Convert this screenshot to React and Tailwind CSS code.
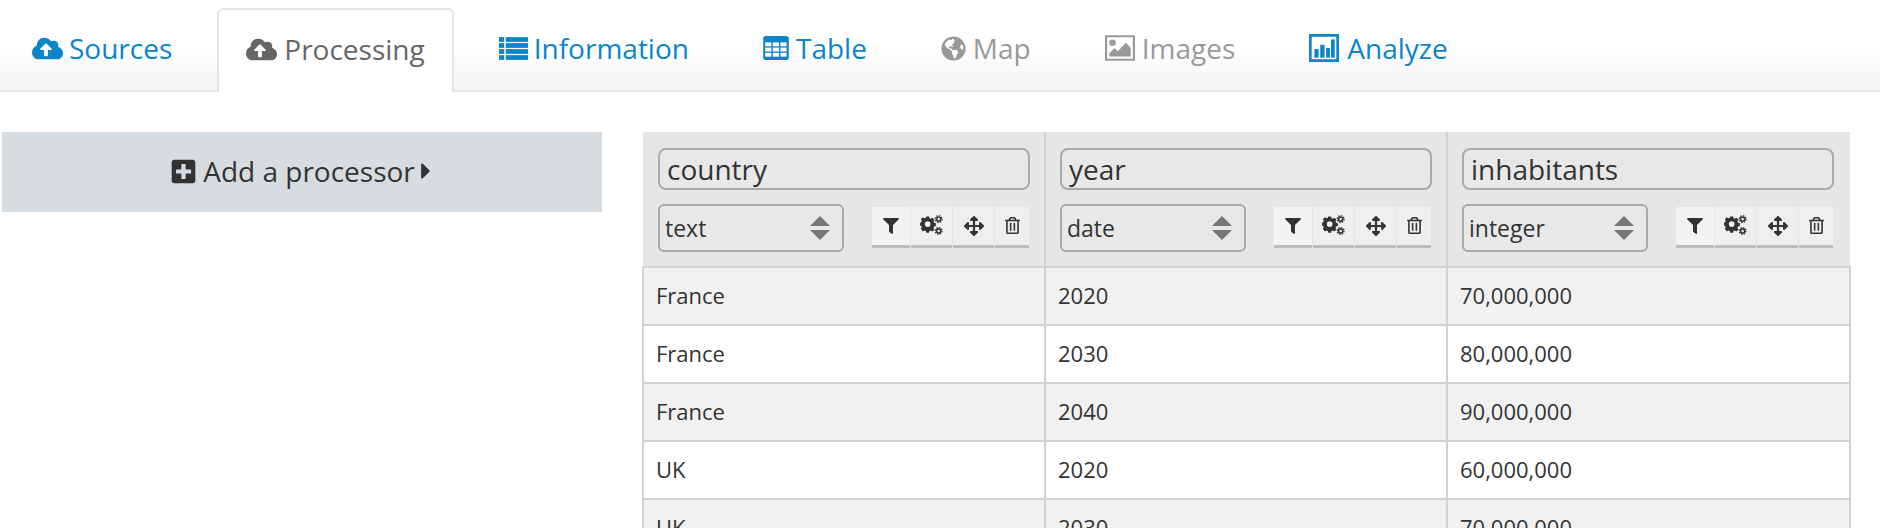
import React from "react";
import { FaCloudUploadAlt, FaGlobeAmericas, FaPlusSquare, FaCaretRight, FaFilter, FaArrowsAlt, FaRegTrashAlt } from "react-icons/fa";

function Analyze({ className }) {
  return (
    <svg viewBox="0 0 28 28" className={className} fill="currentColor">
      <path d="M0 1h28v26H0V1zm2.5 2.5v21h23v-21h-23z" fillRule="evenodd" />
      <rect x="5" y="15" width="4" height="8" />
      <rect x="10.5" y="11" width="4" height="12" />
      <rect x="16" y="14" width="3.5" height="9" />
      <rect x="20.5" y="6" width="3.5" height="17" />
    </svg>
  );
}

function ListIcon({ className }) {
  return (
    <svg viewBox="0 0 28 22" className={className} fill="currentColor">
      {[0, 5.8, 11.6, 17.4].map((y) => (
        <g key={y}>
          <rect x="0" y={y} width="5" height="4.6" />
          <rect x="6.5" y={y} width="21.5" height="4.6" />
        </g>
      ))}
    </svg>
  );
}

function TableIcon({ className }) {
  const cells = [];
  for (let r = 0; r < 3; r++) {
    for (let c = 0; c < 3; c++) {
      cells.push(<rect key={`${r}-${c}`} x={2 + c * 7.6} y={6.4 + r * 5.2} width="6.2" height="3.9" fill="#fbfbfb" />);
    }
  }
  return (
    <svg viewBox="0 0 25.6 24" className={className} fill="currentColor">
      <rect x="0" y="0" width="25.6" height="24" rx="2.5" />
      {cells}
    </svg>
  );
}

function ImageIcon({ className }) {
  return (
    <svg viewBox="0 0 28 24" className={className} fill="currentColor">
      <path d="M0 0h28v24H0V0zm2 2v20h24V2H2z" fillRule="evenodd" />
      <circle cx="7" cy="7" r="3" />
      <path d="M4 20v-3l5-5 3 3 7.5-8L24 12v8z" />
    </svg>
  );
}

function Gears({ className }) {
  return (
    <svg viewBox="0 0 24 22" className={className} fill="currentColor">
      <path
        fillRule="evenodd"
        d="M6.5 5h3l.4 1.9 1.5.6 1.6-1 2.1 2.1-1 1.6.6 1.5 1.9.4v3l-1.9.4-.6 1.5 1 1.6-2.1 2.1-1.6-1-1.5.6-.4 1.7h-3l-.4-1.7-1.5-.6-1.6 1L.8 18l1-1.6-.6-1.5L0 14.5v-3l1.2-.4.6-1.5-1-1.6 2.2-2.1 1.6 1 1.5-.6.4-1.3zM8 10a3 3 0 1 0 0 6 3 3 0 0 0 0-6z"
        transform="translate(0 -3.5)"
      />
      <g fill="none" stroke="currentColor">
        <circle cx="19.5" cy="4.3" r="2.2" strokeWidth="1.7" />
        <circle cx="19.5" cy="4.3" r="3.6" strokeWidth="1.3" strokeDasharray="1.5 1.3" />
        <circle cx="19.5" cy="16.7" r="2.2" strokeWidth="1.7" />
        <circle cx="19.5" cy="16.7" r="3.6" strokeWidth="1.3" strokeDasharray="1.5 1.3" />
      </g>
    </svg>
  );
}

const tabs = [
  { label: "Sources", Icon: FaCloudUploadAlt, tone: "text-[#0b85c8]", size: "w-[31px] h-[31px]", cls: "ml-[3px] gap-[6px]" },
  { label: "Processing", Icon: FaCloudUploadAlt, tone: "text-[#666666]", size: "w-[31px] h-[31px]", cls: "gap-[7px]", active: true },
  { label: "Information", Icon: ListIcon, tone: "text-[#0b85c8]", size: "w-[29px] h-[23px]", cls: "gap-[6px]" },
  { label: "Table", Icon: TableIcon, tone: "text-[#0b85c8]", size: "w-[26px] h-[24px]", cls: "gap-[7px]" },
  { label: "Map", Icon: FaGlobeAmericas, tone: "text-[#999999]", size: "w-[25px] h-[25px]", cls: "gap-[7px]" },
  { label: "Images", Icon: ImageIcon, tone: "text-[#999999]", size: "w-[30px] h-[26px]", cls: "gap-[7px]" },
  { label: "Analyze", Icon: Analyze, tone: "text-[#0b85c8]", size: "w-[30px] h-[30px]", cls: "gap-[8px]" },
];

const columns = [
  { name: "country", type: "text", pad: "pl-[15px] pr-[14px]" },
  { name: "year", type: "date", pad: "pl-[14px] pr-[14px]" },
  { name: "inhabitants", type: "integer", pad: "pl-[14px] pr-[16px]" },
];

const rows = [
  ["France", "2020", "70,000,000"],
  ["France", "2030", "80,000,000"],
  ["France", "2040", "90,000,000"],
  ["UK", "2020", "60,000,000"],
  ["UK", "2030", "70,000,000"],
];

function ToolButton({ Icon, active, cls, iconCls }) {
  return (
    <div className={`flex h-[41px] items-center justify-center border-b-[3px] border-[#bdbdbd] text-[#333333] ${active ? "bg-[#f2f2f2]" : "bg-[#efefef]"} ${cls}`}>
      <Icon className={iconCls} />
    </div>
  );
}

function HeaderCell({ col, last }) {
  return (
    <th className={`h-[135px] bg-[#e6e6e6] p-0 align-top font-normal ${last ? "" : "border-r-2 border-[#d2d2d2]"}`}>
      <div className={`flex flex-col gap-[14px] pt-[16px] ${col.pad}`}>
        <div className="flex h-[42px] items-center rounded-lg border-2 border-[#aaaaaa] bg-[#e8e8e8] pl-[7px] text-left text-[28px] text-[#333333]">
          {col.name}
        </div>
        <div className="flex items-center">
          <div className="flex h-[48px] w-[186px] items-center justify-between rounded-md border-2 border-[#aaaaaa] bg-[#e8e8e8] pl-[5px] pr-[12px] text-[23px] text-[#333333]">
            <span>{col.type}</span>
            <svg viewBox="0 0 20 24" className="h-[24px] w-[20px]" fill="#777777">
              <path d="M10 0l10 10H0z" />
              <path d="M0 14h20L10 24z" />
            </svg>
          </div>
          <div className="-mt-[2px] ml-[28px] flex gap-px">
            <ToolButton Icon={FaFilter} active cls="w-[38px]" iconCls="w-[16px] h-[16px]" />
            <ToolButton Icon={Gears} cls="w-[41px]" iconCls="w-[23px] h-[21px]" />
            <ToolButton Icon={FaArrowsAlt} cls="w-[41px]" iconCls="w-[20px] h-[20px]" />
            <ToolButton Icon={FaRegTrashAlt} cls="w-[34px]" iconCls="w-[15px] h-[17px]" />
          </div>
        </div>
      </div>
    </th>
  );
}

export default function App() {
  return (
    <div className="h-[528px] w-[1880px] overflow-hidden bg-white font-['Open_Sans','Noto_Sans',sans-serif]">
      <nav className="flex h-[92px] gap-[16px] border-b-2 border-[#e5e5e5] bg-gradient-to-b from-white from-50% to-[#f4f4f4] pt-[8px]">
        {tabs.map(({ label, Icon, tone, size, active, cls }) => (
          <div
            key={label}
            className={`-mb-[2px] flex h-[84px] items-center rounded-t-md px-[29px] pb-[4px] text-[28px] ${tone} ${active ? "border-2 border-b-0 border-[#e5e5e5] bg-white !px-[27px]" : ""} ${cls || ""}`}
          >
            <Icon className={size} />
            <span>{label}</span>
          </div>
        ))}
      </nav>
      <main className="flex items-start pl-[2px] pt-[40px]">
        <button className="flex h-[80px] w-[600px] items-center justify-center gap-[6px] bg-[#d7dce0] pb-[2px] text-[28px] text-[#333333]">
          <FaPlusSquare className="h-[27px] w-[27px]" />
          <span>Add a processor</span>
          <FaCaretRight className="-ml-[3px] h-[26px] w-[16px]" />
        </button>
        <table className="ml-[40px] w-[1207px] table-fixed border-collapse text-[22px] text-[#333333]">
          <colgroup>
            <col className="w-[402px]" />
            <col className="w-[402px]" />
            <col className="w-[403px]" />
          </colgroup>
          <thead>
            <tr>
              {columns.map((c, i) => (
                <HeaderCell key={c.name} col={c} last={i === 2} />
              ))}
            </tr>
          </thead>
          <tbody>
            {rows.map((r, i) => (
              <tr key={i} className={i % 2 === 0 ? "bg-[#f1f1f1]" : "bg-white"}>
                {r.map((v, j) => (
                  <td key={j} className="h-[58px] border-2 border-[#d2d2d2] px-[12px] pb-[2px] pt-0 text-left">
                    {v}
                  </td>
                ))}
              </tr>
            ))}
          </tbody>
        </table>
      </main>
    </div>
  );
}
